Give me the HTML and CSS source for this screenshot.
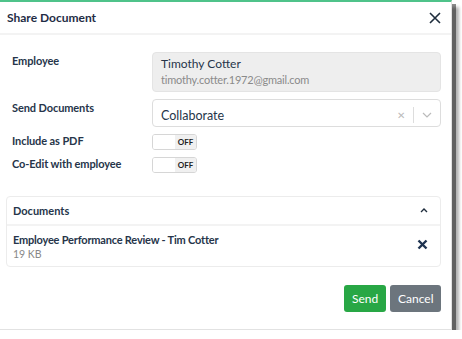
FILE: index.html
```html
<!DOCTYPE html>
<html lang="en">
<head>
    <meta charset="UTF-8">
    <meta name="viewport" content="width=device-width, initial-scale=1.0">
    <title>Share Document</title>
    <link rel="stylesheet" href="styles.css">
</head>
<body>
<div class="modal">
    <div class="modal-header">
        <h1>Share Document</h1>
        <button class="close" aria-label="Close">
            <svg width="12" height="12" viewBox="0 0 12 12"><path d="M1 1L11 11M11 1L1 11" stroke="#1f2d3d" stroke-width="1.6" fill="none"/></svg>
        </button>
    </div>
    <div class="modal-body">
        <div class="row">
            <label>Employee</label>
            <div class="readonly">
                <div class="name">Timothy Cotter</div>
                <div class="email">timothy.cotter.1972@gmail.com</div>
            </div>
        </div>
        <div class="row">
            <label>Send Documents</label>
            <div class="select">
                <span class="value">Collaborate</span>
                <span class="clear">&#x2715;</span>
                <span class="sep"></span>
                <svg class="chevron" width="10" height="6" viewBox="0 0 10 6"><path d="M1 1L5 5L9 1" stroke="#bbb" stroke-width="1.2" fill="none"/></svg>
            </div>
        </div>
        <div class="row small">
            <label>Include as PDF</label>
            <div class="toggle"><span class="knob"></span><span class="off">OFF</span></div>
        </div>
        <div class="row small">
            <label>Co-Edit with employee</label>
            <div class="toggle"><span class="knob"></span><span class="off">OFF</span></div>
        </div>

        <div class="panel">
            <div class="panel-header">
                <span>Documents</span>
                <svg width="8" height="5" viewBox="0 0 8 5"><path d="M1 4L4 1L7 4" stroke="#1f2d3d" stroke-width="1.4" fill="none"/></svg>
            </div>
            <div class="doc">
                <div>
                    <div class="doc-name">Employee Performance Review - Tim Cotter</div>
                    <div class="doc-size">19 KB</div>
                </div>
                <svg width="11" height="11" viewBox="0 0 11 11"><path d="M1.5 1.5L9.5 9.5M9.5 1.5L1.5 9.5" stroke="#1f3350" stroke-width="2.4" fill="none"/></svg>
            </div>
        </div>
    </div>
    <div class="modal-footer">
        <button class="btn send">Send</button>
        <button class="btn cancel">Cancel</button>
    </div>
</div>
</body>
</html>
```

FILE: styles.css
```css
body {
    margin: 0;
    padding: 0;
    background-color: #ffffff;
    font-family: Lato, "Noto Sans", sans-serif;
    font-size: 12px;
    color: #26354a;
}

.modal {
    width: 452px;
    height: 330px;
    background-color: #ffffff;
    border-top: 2px solid #4fc38a;
    border-right: 1px solid #e2e2e2;
    border-bottom: 1px solid #e2e2e2;
    box-shadow: 4px 4px 0 rgba(0, 0, 0, 0.45), 7px 7px 3px rgba(0, 0, 0, 0.3);
    display: flex;
    flex-direction: column;
    box-sizing: border-box;
}

.modal-header {
    height: 31px;
    display: flex;
    align-items: center;
    justify-content: space-between;
    padding: 0 10px 0 7px;
    border-bottom: 2px solid #f3f3f3;
}

h1 {
    margin: 0;
    font-size: 12px;
    font-weight: bold;
    color: #1f2d45;
}

.close {
    border: none;
    background: none;
    padding: 0;
    display: flex;
    cursor: pointer;
}

.modal-body {
    padding: 17px 10px 0 6px;
    flex: 1;
}

.row {
    display: flex;
    margin-left: 6px;
    margin-bottom: 7px;
}

.row label {
    width: 140px;
    font-size: 11px;
    font-weight: bold;
    letter-spacing: -0.1px;
    padding-top: 2px;
    color: #26354a;
}

.readonly {
    width: 289px;
    height: 40px;
    box-sizing: border-box;
    background-color: #eeeeee;
    border: 1px solid #e4e4e4;
    border-radius: 4px;
    padding: 3px 8px;
    line-height: 16px;
}

.name {
    color: #26354a;
}

.email {
    color: #8a8a8a;
    font-size: 11px;
    letter-spacing: -0.2px;
}

.select {
    width: 289px;
    height: 28px;
    box-sizing: border-box;
    border: 1px solid #dddddd;
    border-radius: 4px;
    display: flex;
    align-items: center;
    padding: 4px 8px 0 8px;
}

.select .value {
    flex: 1;
    font-size: 12.5px;
}

.clear {
    color: #bbbbbb;
    font-size: 10px;
    margin-right: 8px;
}

.sep {
    width: 1px;
    height: 16px;
    background-color: #dddddd;
    margin-right: 8px;
}

.row.small label {
    padding-top: 0;
}

.toggle {
    width: 45px;
    height: 16px;
    box-sizing: border-box;
    border: 1px solid #d6d6d6;
    border-radius: 3px;
    display: flex;
    overflow: hidden;
}

.knob {
    width: 22px;
    background-color: #ffffff;
}

.off {
    flex: 1;
    background-color: #f0f0f0;
    font-size: 8px;
    font-weight: bold;
    text-align: center;
    line-height: 14px;
    color: #222;
}

.panel {
    margin-top: 23px;
    border: 1px solid #ececec;
    border-radius: 4px;
}

.panel-header {
    height: 27px;
    display: flex;
    align-items: center;
    justify-content: space-between;
    padding: 0 12px 0 6px;
    border-bottom: 2px solid #f3f3f3;
    font-size: 11px;
    font-weight: bold;
}

.doc {
    display: flex;
    align-items: flex-start;
    justify-content: space-between;
    padding: 7px 12px 5px 6px;
    line-height: 14px;
}

.doc svg {
    margin-top: 6px;
}

.doc-name {
    font-size: 11px;
    font-weight: bold;
    letter-spacing: -0.2px;
}

.doc-size {
    color: #888888;
    font-size: 10.5px;
}

.modal-footer {
    display: flex;
    justify-content: flex-end;
    gap: 4px;
    padding: 0 10px 17px 0;
}

.btn {
    height: 27px;
    border: none;
    border-radius: 3px;
    color: #ffffff;
    font-family: Lato, "Noto Sans", sans-serif;
    font-size: 12px;
    padding: 0 8px;
    cursor: pointer;
}

.send {
    background-color: #28a745;
    width: 42px;
}

.cancel {
    background-color: #6c757d;
    width: 51px;
}
```
